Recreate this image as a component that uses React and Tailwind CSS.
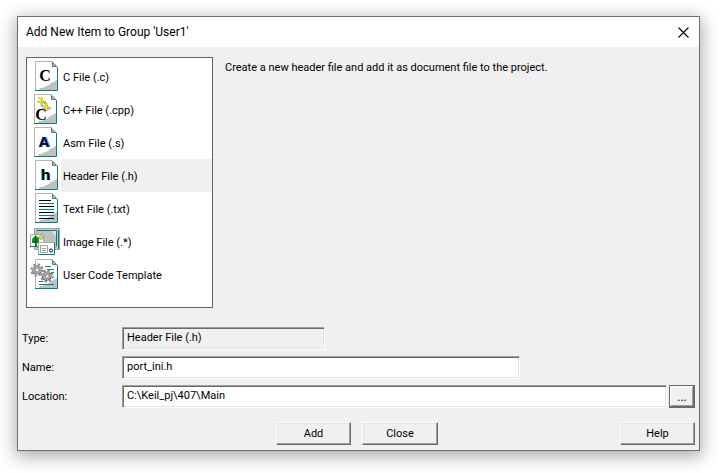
import { useState } from 'react';

function Page({ x = 5, children }) {
  return (
    <g transform={`translate(${x} 1)`}>
      <path d="M0 0H17L23 6V30H0Z" fill="#fff" />
      <path d="M22 19V29H4L5 27H8L9 26L12 25L14 24L16 22L19 21L20 20Z" fill="#c0c0c0" />
      <path d="M0.5 29V0.5H17" fill="none" stroke="#b4b4b4" />
      <path d="M22.5 6V29.5H0" fill="none" stroke="#008080" />
      <path d="M17 0L23 6H17Z" fill="#c0c0c0" />
      <path d="M16.5 0.5L22.5 6.5M17.5 1V5.5H22" fill="none" stroke="#687676" />
      {children}
    </g>
  );
}

function Glyph({ x, y, size, children, serif }) {
  return (
    <text
      x={x}
      y={y}
      textAnchor="middle"
      fontSize={size}
      className={serif ? "font-['Liberation_Serif',serif] font-bold" : "font-['Noto_Sans',sans-serif] font-bold"}
    >
      {children}
    </text>
  );
}

function Gear({ cx, cy }) {
  return (
    <g transform={`translate(${cx} ${cy})`}>
      <circle r="5.6" fill="none" stroke="#8a8a8a" strokeWidth="2.2" strokeDasharray="2.2 2.2" />
      <circle r="3.5" fill="none" stroke="#a2a2a2" strokeWidth="3.2" />
      <circle r="1.8" fill="#f4f4f4" stroke="#777" strokeWidth="0.6" />
      <path d="M2 4L4 2M-4 3L-2 4" stroke="#666" />
    </g>
  );
}

const icons = {
  c: (
    <Page>
      <Glyph x={10} y={20} size={16} serif>C</Glyph>
    </Page>
  ),
  cpp: (
    <Page x={4}>
      <circle cx="9.5" cy="10" r="2.5" fill="none" stroke="#b8b8b8" strokeWidth="1.5" />
      <path d="M4 3L12 11M3 8H12M8 3V12M11 9L16 16M8 14H17M13 9V17" stroke="#8c8c8c" />
      <path d="M7 3V11M3 7H11M12 9V17M9 13H16" stroke="#f0e800" strokeWidth="1.6" />
      <Glyph x={7} y={26} size={16} serif>C</Glyph>
    </Page>
  ),
  asm: (
    <Page x={4}>
      <g fill="#00a8d8"><Glyph x={11} y={20} size={15}>A</Glyph></g>
      <g fill="#00004a"><Glyph x={10} y={20} size={15}>A</Glyph></g>
    </Page>
  ),
  h: (
    <Page>
      <g fill="#00d8e0"><Glyph x={10} y={20} size={15}>h</Glyph></g>
      <g fill="#000"><Glyph x={11} y={20} size={15}>h</Glyph></g>
    </Page>
  ),
  txt: (
    <Page>
      <path d="M4 7.5H16M4 13.5H19M4 19.5H19M4 25.5H19" stroke="#000" />
      <path d="M4 10.5H19M4 16.5H19M4 22.5H19" stroke="#008080" />
    </Page>
  ),
  image: (
    <g>
      <path d="M4.5 3.5H29.5V24.5H4.5Z" fill="#c8c8c8" stroke="#a0a0a0" />
      <path d="M6.5 5.5H26.5V22.5H6.5Z" fill="#c0c0c0" stroke="#a8a8a8" />
      <path d="M7 5.5H26.5V21" fill="none" stroke="#008080" />
      <path d="M21 6H26V12Z" fill="#dedede" />
      <path d="M28.5 5V24" stroke="#008080" />
      <path d="M0.5 9.5H13.5V21.5H0.5Z" fill="#fff" stroke="#a4a4a4" />
      <path d="M0 21.5H8" fill="none" stroke="#008080" />
      <path d="M5.5 10L9 13V18H7V21H5V18H2V14L4 12Z" fill="#159526" />
      <path d="M5.5 12V21M3 16.5H8" stroke="#06571a" />
      <circle cx="11" cy="12.5" r="2" fill="#eedb20" stroke="#777" strokeWidth="0.5" />
      <path d="M8.5 17.5H24.5V29.5H8.5Z" fill="#fff" stroke="#008080" />
      <path d="M8.5 29V17.5H24" fill="none" stroke="#a8a8a8" />
      <path d="M10.5 20.5H17.5V27.5H10.5ZM12 23.5H16M12 25.5H16" fill="none" stroke="#a0a0a0" />
      <circle cx="21" cy="25.5" r="1.5" fill="#fff" stroke="#000080" />
      <path d="M25 21H27V23H25Z" fill="#dcb913" />
    </g>
  ),
  template: (
    <g>
      <Page>
        <path d="M10 7.5H16M12 10.5H19M16 13.5H19M4 22.5H8M4 25.5H19" stroke="#008080" />
      </Page>
      <Gear cx={7} cy={12} />
      <Gear cx={17} cy={18} />
      <path d="M12 19L22 15M16 23L23 19" stroke="#303070" strokeDasharray="1 3" />
    </g>
  ),
};

const items = [
  { id: 'c', label: 'C File (.c)' },
  { id: 'cpp', label: 'C++ File (.cpp)' },
  { id: 'asm', label: 'Asm File (.s)' },
  { id: 'h', label: 'Header File (.h)' },
  { id: 'txt', label: 'Text File (.txt)' },
  { id: 'image', label: 'Image File (.*)' },
  { id: 'template', label: 'User Code Template' },
];

const sunken =
  'h-[23px] min-w-0 border border-t-[#a0a0a0] border-l-[#a0a0a0] border-r-white border-b-white pl-1 pb-0.5 shadow-[inset_1px_1px_#696969,inset_-1px_-1px_#e3e3e3] outline-none';
const raised =
  'h-[23px] border border-t-white border-l-white border-r-[#696969] border-b-[#696969] bg-[#f0f0f0] shadow-[inset_-1px_-1px_#a0a0a0,inset_1px_1px_#e3e3e3]';

function Field({ id, label, children }) {
  return (
    <div className="flex items-center">
      <label htmlFor={id} className="w-[100px] shrink-0">{label}</label>
      {children}
    </div>
  );
}

export default function App() {
  const [selected, setSelected] = useState('h');
  const [name, setName] = useState('port_ini.h');
  const [location, setLocation] = useState('C:\\Keil_pj\\407\\Main');
  const type = items.find((item) => item.id === selected).label;

  return (
    <main className="bg-white pt-4 pr-[21px] pb-[22px] pl-[17px] font-['Roboto',sans-serif] text-[11px] leading-4 text-black">
      <section
        aria-labelledby="dialog-title"
        className="border border-[#6e6e6e] bg-[#f0f0f0] shadow-[0_4px_16px_2px_rgba(0,0,0,0.32)]"
      >
        <header className="flex h-[30px] items-center justify-between bg-white pr-[5px] pl-2">
          <h1 id="dialog-title" className="text-[12px]">Add New Item to Group 'User1'</h1>
          <button type="button" aria-label="Close dialog" className="p-[5px]">
            <svg width="11" height="11" viewBox="0 0 11 11" fill="none" stroke="#000" strokeWidth="1.1">
              <path d="M0.5 0.5L10.5 10.5M10.5 0.5L0.5 10.5" />
            </svg>
          </button>
        </header>

        <div className="flex gap-3 px-2 pt-2.5">
          <ul className="h-[251px] w-[187px] shrink-0 border border-[#646464] bg-white pt-0.5 pl-[3px]">
            {items.map((item) => (
              <li key={item.id}>
                <button
                  type="button"
                  aria-pressed={item.id === selected}
                  onClick={() => setSelected(item.id)}
                  className="flex h-[33px] w-full text-left"
                >
                  <svg width="31" height="33" viewBox="0 0 31 33" className="shrink-0" aria-hidden="true">
                    {icons[item.id]}
                  </svg>
                  <span className={`flex flex-1 items-center self-stretch pt-0.5 pl-0.5 ${item.id === selected ? 'bg-[#f0f0f0]' : ''}`}>
                    {item.label}
                  </span>
                </button>
              </li>
            ))}
          </ul>
          <p className="pt-[3px]">Create a new header file and add it as document file to the project.</p>
        </div>

        <form className="px-1 pt-[19px] pb-[5px]" onSubmit={(e) => e.preventDefault()}>
          <div className="flex flex-col gap-1.5">
            <Field id="type" label="Type:">
              <input id="type" readOnly value={type} className={`${sunken} w-[203px] bg-[#f0f0f0]`} />
            </Field>
            <Field id="name" label="Name:">
              <input id="name" value={name} onChange={(e) => setName(e.target.value)} className={`${sunken} w-[398px] bg-white`} />
            </Field>
            <Field id="location" label="Location:">
              <input id="location" value={location} onChange={(e) => setLocation(e.target.value)} className={`${sunken} flex-1 bg-white`} />
              <button
                type="button"
                aria-label="Browse"
                className="ml-0.5 h-[23px] w-[26px] border border-[#696969] bg-[#f0f0f0] text-[12px] shadow-[inset_-1px_-1px_#696969,inset_1px_1px_#fff,inset_-2px_-2px_#a0a0a0]"
              >
                ...
              </button>
            </Field>
          </div>
          <div className="mt-3.5 flex gap-[11px] pl-[254px]">
            <button type="submit" className={`${raised} w-[75px]`}>Add</button>
            <button type="button" className={`${raised} w-[76px]`}>Close</button>
            <button type="button" className={`${raised} ml-auto w-[75px]`}>Help</button>
          </div>
        </form>
      </section>
    </main>
  );
}
